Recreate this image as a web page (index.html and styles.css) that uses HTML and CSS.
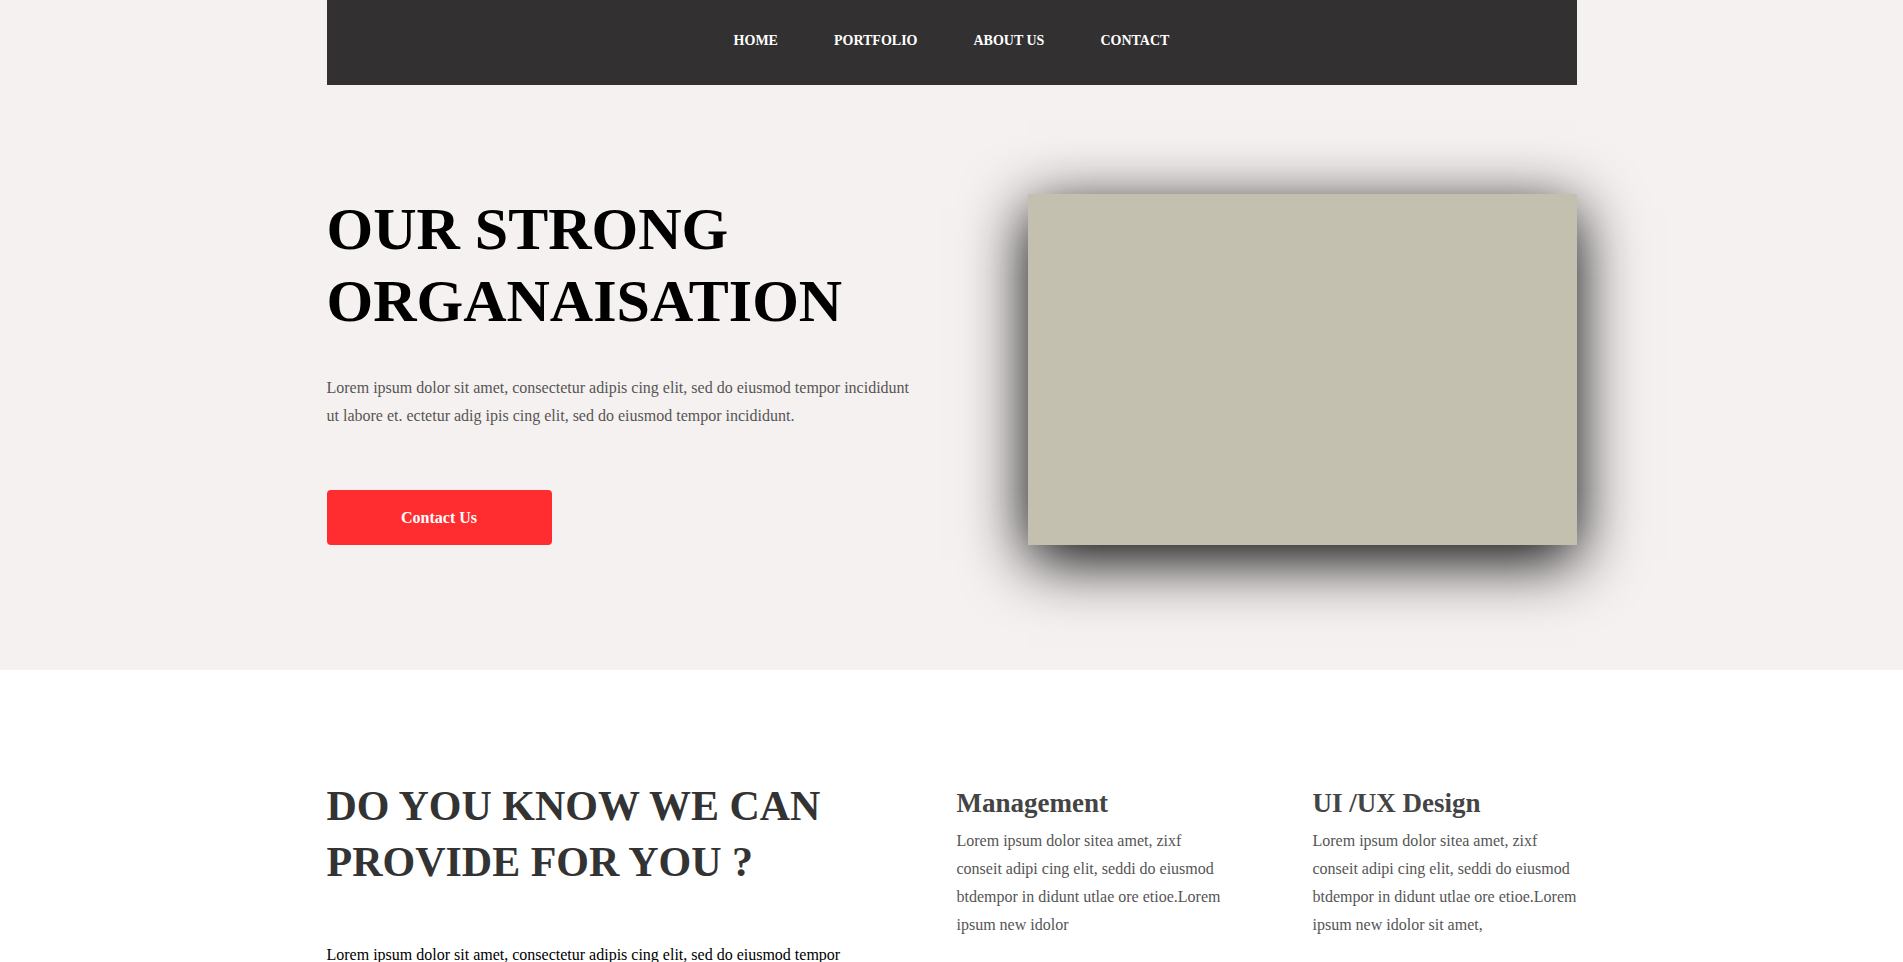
FILE: index.html
```html
<!DOCTYPE html>
<html lang="en">
<head>
<meta charset="utf-8">
<title>Our Strong Organaisation</title>
<link rel="stylesheet" href="styles.css">
</head>
<body>
<section class="hero">
  <nav class="nav">
    <a href="#" class="nav-link">HOME</a>
    <a href="#" class="nav-link">PORTFOLIO</a>
    <a href="#" class="nav-link">ABOUT US</a>
    <a href="#" class="nav-link">CONTACT</a>
  </nav>
  <div class="hero-row">
    <div class="hero-text">
      <h1 class="hero-title">OUR STRONG ORGANAISATION</h1>
      <p class="hero-desc">Lorem ipsum dolor sit amet, consectetur adipis cing elit, sed do eiusmod tempor incididunt ut labore et. ectetur adig ipis cing elit, sed do eiusmod tempor incididunt.</p>
      <a href="#" class="btn">Contact Us</a>
    </div>
    <div class="hero-image"></div>
  </div>
</section>
<section class="services">
  <div class="services-row">
    <div class="services-intro">
      <h2 class="services-title">DO YOU KNOW WE CAN PROVIDE FOR YOU ?</h2>
      <p class="services-desc">Lorem ipsum dolor sit amet, consectetur adipis cing elit, sed do eiusmod tempor incididunt ut labore et. ectetur adig ipis cing elit, sed do eiusmod tempor incididunt.</p>
    </div>
    <div class="service">
      <h3 class="service-title">Management</h3>
      <p class="service-desc">Lorem ipsum dolor sitea amet, zixf conseit adipi cing elit, seddi do eiusmod btdempor in didunt utlae ore etioe.Lorem ipsum new idolor</p>
    </div>
    <div class="service">
      <h3 class="service-title">UI /UX Design</h3>
      <p class="service-desc">Lorem ipsum dolor sitea amet, zixf conseit adipi cing elit, seddi do eiusmod btdempor in didunt utlae ore etioe.Lorem ipsum new idolor sit amet,</p>
    </div>
  </div>
</section>
</body>
</html>
```
FILE: styles.css
```css
* { box-sizing: border-box; }
html, body { margin: 0; padding: 0; }
body {
  font-family: "Liberation Serif", "Times New Roman", serif;
  background: #ffffff;
  color: #000;
}
.hero {
  background: #f5f1f0;
  padding-bottom: 125px;
}
.nav {
  width: 1250px;
  height: 85px;
  margin: 0 auto;
  background: #323031;
  display: flex;
  justify-content: center;
  align-items: center;
  gap: 56px;
  padding-bottom: 4px;
}
.nav-link {
  color: #ffffff;
  text-decoration: none;
  font-weight: bold;
  font-size: 14px;
}
.hero-row {
  width: 1250px;
  margin: 108px auto 0;
  display: flex;
  justify-content: space-between;
  align-items: flex-start;
}
.hero-text {
  width: 590px;
}
.hero-title {
  margin: 0;
  font-size: 60px;
  line-height: 72px;
  font-weight: bold;
  color: #000;
}
.hero-desc {
  margin: 37px 0 0;
  font-size: 16px;
  line-height: 28px;
  color: #555;
}
.btn {
  display: flex;
  align-items: center;
  justify-content: center;
  width: 225px;
  height: 55px;
  margin-top: 60px;
  background: #ff2d2f;
  color: #fff;
  border-radius: 4px;
  font-weight: bold;
  font-size: 16px;
  text-decoration: none;
}
.hero-image {
  width: 549px;
  height: 351px;
  margin-top: 1px;
  background: #c3c0b0;
  box-shadow: 0 15px 60px #000;
}
.services {
  padding-top: 108px;
}
.services-row {
  width: 1250px;
  margin: 0 auto;
  display: flex;
  align-items: flex-start;
}
.services-intro {
  width: 560px;
  margin-right: 70px;
  flex: none;
}
.services-title {
  margin: 0;
  font-size: 42px;
  line-height: 56px;
  font-weight: bold;
  color: #333;
}
.services-desc {
  margin: 51px 0 0;
  font-size: 16px;
  line-height: 28px;
  color: #000;
}
.service {
  width: 264px;
  flex: none;
  margin-top: 9px;
}
.service + .service {
  margin-left: 92px;
}
.service-title {
  margin: 0;
  font-size: 27px;
  line-height: 32px;
  font-weight: bold;
  color: #444;
}
.service-desc {
  margin: 8px 0 0;
  font-size: 16px;
  line-height: 28px;
  color: #555;
}
```
